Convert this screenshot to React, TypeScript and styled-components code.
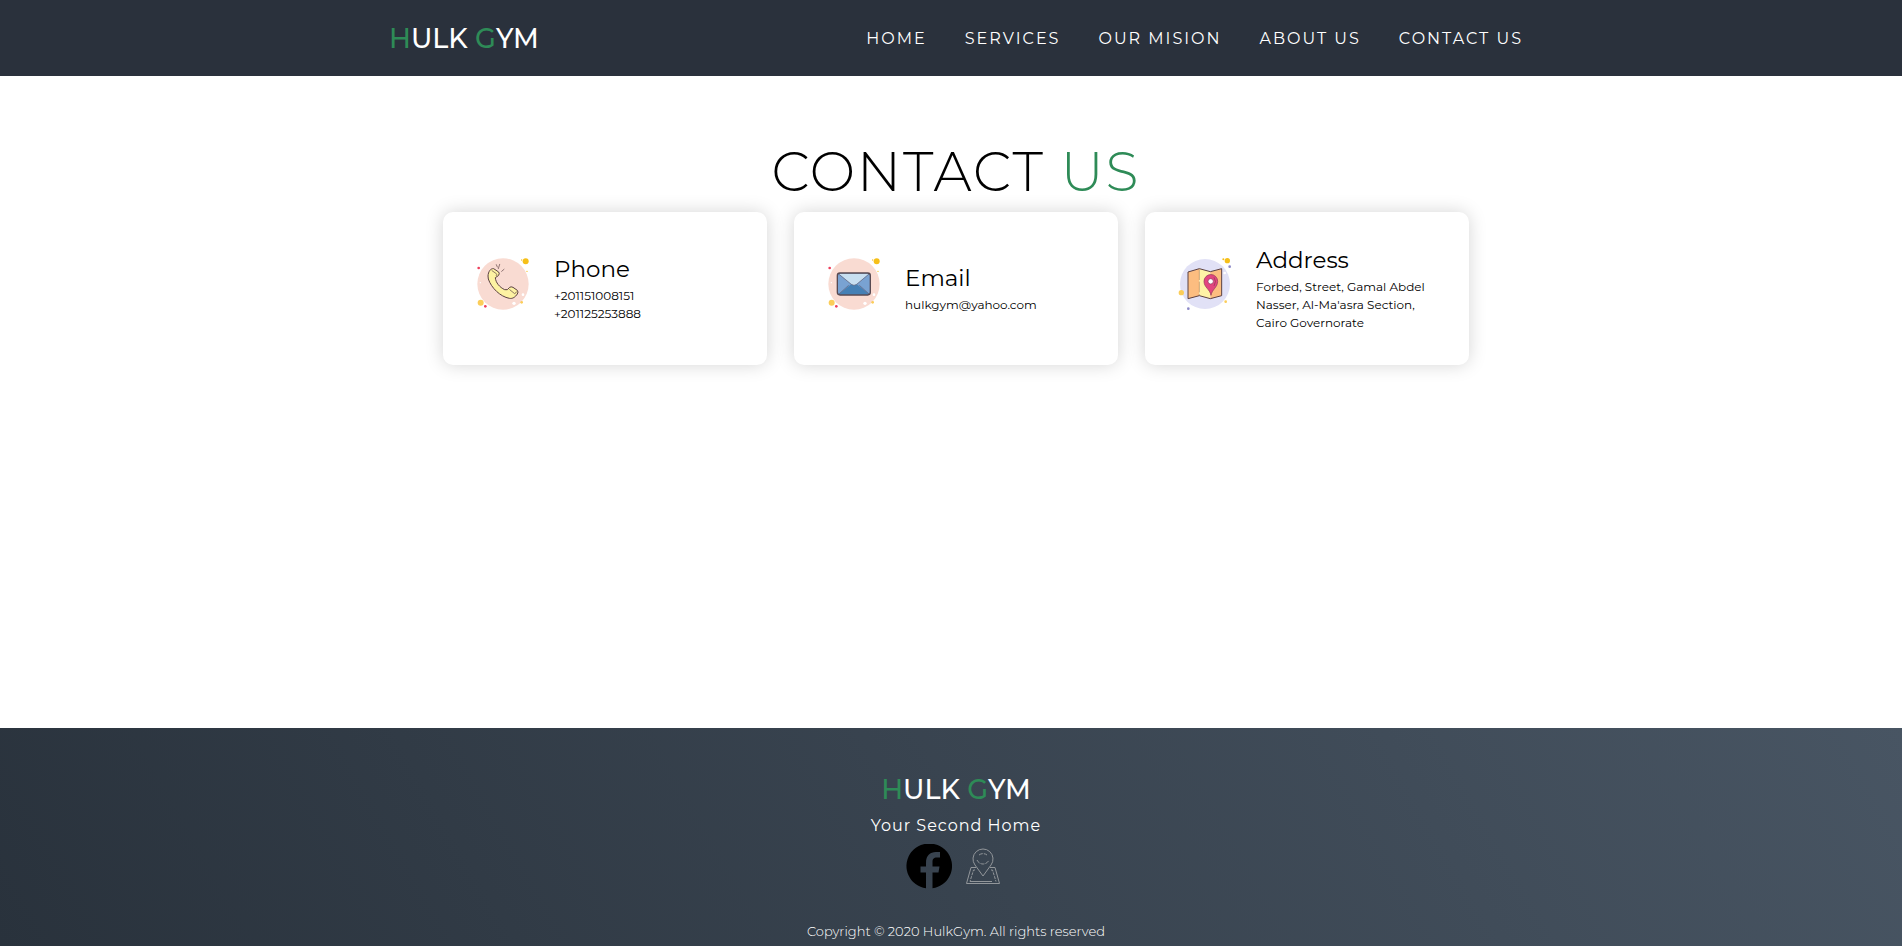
import React from "react";
import styled, { createGlobalStyle } from "styled-components";

const GlobalStyle = createGlobalStyle`
  * {
    margin: 0;
    padding: 0;
    box-sizing: border-box;
  }
  body {
    font-family: Montserrat, Inter, "Open Sans", sans-serif;
    background: #fff;
    color: #000;
  }
  a {
    text-decoration: none;
  }
`;

const Page = styled.div`
  min-height: 100vh;
  display: flex;
  flex-direction: column;
`;

const Header = styled.header`
  min-height: 76px;
  padding: 2px 20px 0 30px;
  display: flex;
  align-items: center;
  justify-content: center;
  background: #2a313c;
`;

const HeaderInner = styled.div`
  width: 100%;
  max-width: 1134px;
  display: flex;
  align-items: center;
  justify-content: space-between;
`;

const Brand = styled.a`
  display: block;
  font-size: 27px;
  line-height: 34px;
  font-weight: 500;
  color: #fff;
`;

const Accent = styled.span`
  color: seagreen;
`;

const NavList = styled.ul`
  display: flex;
  gap: 38px;
  list-style: none;
`;

const NavLink = styled.a`
  font-size: 16px;
  line-height: 24px;
  letter-spacing: 2px;
  text-transform: uppercase;
  color: #fff;
`;

const Main = styled.main`
  flex: 1;
  padding: 62px 20px 60px 30px;
  display: flex;
  flex-direction: column;
  align-items: center;
`;

const Title = styled.h1`
  font-size: 54px;
  line-height: 68px;
  font-weight: 300;
  letter-spacing: 2px;
  text-transform: uppercase;
  text-align: center;
  margin-bottom: 6px;
`;

const Cards = styled.div`
  width: 100%;
  max-width: 1026px;
  display: grid;
  grid-template-columns: repeat(3, 1fr);
  gap: 27px;
`;

const Card = styled.article`
  min-height: 153px;
  padding: 24px 30px;
  display: flex;
  align-items: center;
  gap: 21px;
  border-radius: 10px;
  background: #fff;
  box-shadow: 0 0 18px rgba(0, 0, 0, 0.17);
`;

const CardIcon = styled.svg`
  flex: none;
  width: 60px;
  height: 64px;
`;

const CardTitle = styled.h2`
  font-size: 23px;
  line-height: 31px;
  font-weight: 400;
  margin-bottom: 2px;
`;

const CardLine = styled.p`
  font-size: 12px;
  line-height: 18px;
  white-space: nowrap;
`;

const Footer = styled.footer`
  padding: 45px 20px 6px 30px;
  display: flex;
  flex-direction: column;
  align-items: center;
  color: #fff;
  background: linear-gradient(60deg, #29323c 0%, #485563 100%);
`;

const Tagline = styled.p`
  margin-top: 7px;
  font-size: 16px;
  line-height: 24px;
  letter-spacing: 1px;
`;

const Social = styled.div`
  margin-top: 6px;
  display: flex;
  gap: 4px;
`;

const SocialLink = styled.a`
  display: block;
  width: 50px;
  height: 50px;
`;

const Copyright = styled.p`
  margin-top: 28px;
  font-size: 13px;
  line-height: 18px;
  font-weight: 300;
`;

const Bubble = () => (
  <>
    <circle cx="99" cy="102" r="77" fill="#f9dbd2" />
    <circle cx="167" cy="34" r="9" fill="#f6bf18" />
    <circle cx="155" cy="30" r="2" fill="#f6bf18" />
    <circle cx="171" cy="64" r="2" fill="#f6bf18" />
    <circle cx="26" cy="54" r="4" fill="#ee3e5c" />
    <circle cx="46" cy="169" r="4" fill="#ee3e5c" />
    <circle cx="32" cy="158" r="9" fill="#fbcd59" />
    <circle cx="155" cy="157" r="4" fill="#fbcd59" />
    <circle cx="132" cy="160" r="5" fill="#fff" />
    <circle cx="159" cy="134" r="4" fill="#fff" />
    <circle cx="31" cy="98" r="2" fill="#fff" />
  </>
);

const PhoneIcon = () => (
  <CardIcon viewBox="9 21 180 192" aria-hidden="true">
    <Bubble />
    <path
      d="M54 78C55 65 61 55 71 56L86 66Q90 71 85 77L76 83C77 98 89 112 104 119L112 119L119 112Q123 109 129 112L142 121Q146 126 142 132C136 141 128 147 118 145C91 140 64 114 55 87Z"
      fill="#fdf2a2"
      stroke="#5b4042"
      strokeWidth="3"
      strokeLinejoin="round"
    />
    <path
      d="M66 62L79 71Q82 74 79 77M119 119L134 131Q138 130 139 126M79 44L82 51M89 43L85 56M102 58L95 64"
      fill="none"
      stroke="#5b4042"
      strokeWidth="2"
      strokeLinecap="round"
    />
  </CardIcon>
);

const EmailIcon = () => (
  <CardIcon viewBox="9 21 180 192" aria-hidden="true">
    <Bubble />
    <rect x="49" y="69" width="99" height="66" rx="8" fill="#79a2d2" />
    <path d="M54 132L99 96L144 132Q142 134 138 134H58Z" fill="#4580b5" />
    <path d="M53 71L91 103Q99 109 107 103L144 71Z" fill="#c7dff1" />
    <path
      d="M53 72L91 103Q99 109 107 103L144 72M54 132L83 106M144 132L115 106"
      fill="none"
      stroke="#5c5b73"
      strokeWidth="2"
    />
    <rect x="49" y="69" width="99" height="66" rx="8" fill="none" stroke="#574951" strokeWidth="4" />
  </CardIcon>
);

const AddressIcon = () => (
  <CardIcon viewBox="9 21 180 192" aria-hidden="true">
    <circle cx="99" cy="102" r="75" fill="#e1e1f6" />
    <circle cx="166" cy="32" r="8" fill="#f6bf18" />
    <circle cx="154" cy="28" r="3" fill="#f6bf18" />
    <circle cx="173" cy="50" r="4" fill="#8d8ac7" />
    <circle cx="49" cy="176" r="4" fill="#8d8ac7" />
    <circle cx="28" cy="128" r="8" fill="#fbcd59" />
    <circle cx="161" cy="155" r="4" fill="#fbcd59" />
    <circle cx="158" cy="69" r="4" fill="#fff" />
    <path d="M48 66L82 56V137L48 146Z" fill="#fcbd80" />
    <path d="M82 56L115 65V146L82 137Z" fill="#fef3a6" />
    <path d="M115 65L149 56V137L115 146Z" fill="#fcbd80" />
    <path d="M82 58V137" stroke="#b98a5d" strokeWidth="2" strokeDasharray="32 5" />
    <path
      d="M48 66L82 56L115 65L149 56V137L115 146L82 137L48 146Z"
      fill="none"
      stroke="#5b4042"
      strokeWidth="3"
      strokeLinejoin="round"
    />
    <path
      d="M117 136C114 118 96 112 96 94A20 20 0 0 1 137 94C137 112 120 118 117 136Z"
      fill="#e3457f"
      stroke="#8c3557"
      strokeWidth="2"
    />
    <path d="M126 82Q135 94 126 108" fill="none" stroke="#8c3557" strokeWidth="2" />
    <circle cx="116" cy="94" r="8" fill="#fff" stroke="#8c3557" strokeWidth="2" />
  </CardIcon>
);

const FacebookIcon = () => (
  <svg viewBox="-2 1 50 50" width="50" height="50" aria-hidden="true">
    <path
      d="M20 45.300V29.500H14.500V23.500H20V20C20 12.500 24 9 30 9H34V14.500H31C27.500 14.500 26.500 16 26.500 19V23.500H33.500L32.500 29.500H26.500V45.300A22.800 22.500 0 1 0 20 45.300Z"
      fill="#000"
    />
  </svg>
);

const LocationIcon = () => (
  <svg viewBox="0 0 50 50" width="50" height="50" aria-hidden="true">
    <g fill="none" stroke="#92969a" strokeWidth="1" strokeLinejoin="round">
      <path d="M25 32L17 21A10 10 0 1 1 33 21Z" />
      <path d="M19 16A6.500 6.500 0 0 0 31 16M21 11A6.500 6.500 0 0 1 29 11" strokeDasharray="4 1" />
      <path d="M18 23.500H13L8.500 39.500H41.500L37 23.500H32" />
      <path d="M17 26H15.500L12 37.500M33 26H34.500L38 37.500" strokeDasharray="3 1" />
      <path d="M12 37.500H34" />
    </g>
  </svg>
);

const BrandName = () => (
  <Brand href="#home">
    <Accent>H</Accent>ULK <Accent>G</Accent>YM
  </Brand>
);

const links = [
  ["Home", "#home"],
  ["Services", "#services"],
  ["Our Mision", "#mission"],
  ["About Us", "#about"],
  ["Contact Us", "#contact"],
];

const contacts = [
  { title: "Phone", Icon: PhoneIcon, lines: ["+201151008151", "+201125253888"] },
  { title: "Email", Icon: EmailIcon, lines: ["hulkgym@yahoo.com"] },
  {
    title: "Address",
    Icon: AddressIcon,
    lines: ["Forbed, Street, Gamal Abdel", "Nasser, Al-Ma'asra Section,", "Cairo Governorate"],
  },
];

export default function App() {
  return (
    <Page>
      <GlobalStyle />
      <Header>
        <HeaderInner>
          <BrandName />
          <nav>
            <NavList>
              {links.map(([label, href]) => (
                <li key={href}>
                  <NavLink href={href}>{label}</NavLink>
                </li>
              ))}
            </NavList>
          </nav>
        </HeaderInner>
      </Header>
      <Main id="contact">
        <Title>
          Contact <Accent>Us</Accent>
        </Title>
        <Cards>
          {contacts.map(({ title, Icon, lines }) => (
            <Card key={title}>
              <Icon />
              <div>
                <CardTitle>{title}</CardTitle>
                {lines.map((line) => (
                  <CardLine key={line}>{line}</CardLine>
                ))}
              </div>
            </Card>
          ))}
        </Cards>
      </Main>
      <Footer>
        <BrandName />
        <Tagline>Your Second Home</Tagline>
        <Social>
          <SocialLink href="#facebook" aria-label="Facebook">
            <FacebookIcon />
          </SocialLink>
          <SocialLink href="#location" aria-label="Location">
            <LocationIcon />
          </SocialLink>
        </Social>
        <Copyright>Copyright © 2020 HulkGym. All rights reserved</Copyright>
      </Footer>
    </Page>
  );
}
